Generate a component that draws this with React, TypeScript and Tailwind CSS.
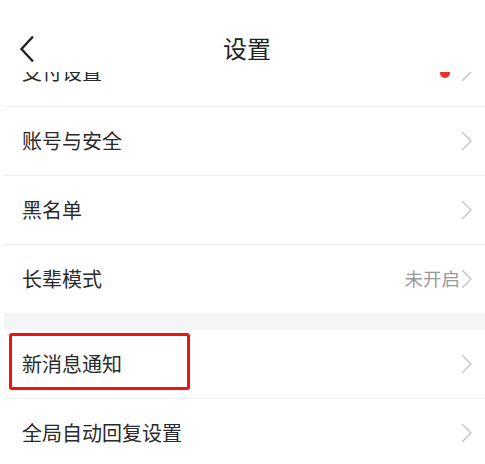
import React from "react";

const font = { fontFamily: '"Noto Sans CJK SC", "Noto Sans", sans-serif' };

const Chevron = ({ className = "" }: { className?: string }) => (
  <svg width="11" height="20" viewBox="0 0 11 20" className={className}>
    <polyline points="1,1 10,10 1,19" fill="none" stroke="#c4c4c4" strokeWidth="1.4" />
  </svg>
);

interface RowProps {
  label: string;
  value?: string;
  dot?: boolean;
  boxed?: boolean;
  divider?: boolean;
}

const Row = ({ label, value, dot, boxed, divider = true }: RowProps) => (
  <div className="pl-[4px]">
    <div className="relative h-[68px] flex items-center justify-between pl-[18px] pr-[13px]">
      {boxed && (
        <div className="absolute left-[5px] top-[3px] w-[181px] h-[57px] border-[3px] border-[#f0140a] rounded-[3px]" />
      )}
      <span className="text-[20px] text-[#2a2a2a]">{label}</span>
      <div className="flex items-center">
        {dot && <span className="w-[10px] h-[10px] rounded-full bg-[#e8342c] mr-[11px] mt-[2px]" />}
        {value && <span className="text-[18.5px] text-[#999] mr-[1px]">{value}</span>}
        <Chevron />
      </div>
    </div>
    {divider && <div className="h-px bg-[#eeeeee]" />}
  </div>
);

export default function App() {
  return (
    <div className="w-[485px] h-[464px] bg-white overflow-hidden relative" style={font}>
      <div className="absolute top-0 left-0 right-0 h-[72px] bg-white z-10 flex items-center justify-center">
        <svg width="16" height="28" viewBox="0 0 16 28" className="absolute left-[19px] top-[35px]">
          <polyline points="14,1.5 2.5,14 14,26.5" fill="none" stroke="#222" strokeWidth="2.4" />
        </svg>
        <span className="text-[24px] text-[#222] mt-[24px] ml-[9px]">设置</span>
      </div>
      <div className="pt-[38px]">
        <Row label="支付设置" dot />
        <Row label="账号与安全" />
        <Row label="黑名单" />
        <Row label="长辈模式" value="未开启" divider={false} />
        <div className="h-[17px] ml-[4px] bg-[#f4f5f7]" />
        <Row label="新消息通知" boxed />
        <Row label="全局自动回复设置" divider={false} />
      </div>
    </div>
  );
}
